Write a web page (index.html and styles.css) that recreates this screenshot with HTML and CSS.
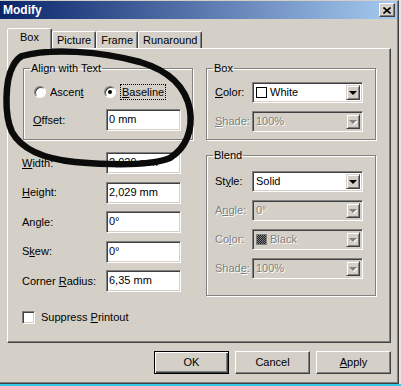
FILE: index.html
```html
<!DOCTYPE html>
<html lang="en">

<head>
    <meta charset="UTF-8">
    <title>Modify</title>
    <link rel="stylesheet" href="styles.css">
</head>

<body>
    <div class="window">
        <div class="titlebar">
            <span class="title">Modify</span>
            <span class="close">
                <svg width="8" height="7" viewBox="0 0 8 7"><path d="M0.5 0.5 L7.5 6.5 M7.5 0.5 L0.5 6.5" stroke="#000" stroke-width="1.6" fill="none"/></svg>
            </span>
        </div>

        <div class="content">
            <div class="tabs">
                <div class="tab active">Box</div>
                <div class="tab">Picture</div>
                <div class="tab">Frame</div>
                <div class="tab">Runaround</div>
            </div>

            <div class="panel">
                <div class="columns">
                    <div class="col-left">
                        <fieldset class="group align-group">
                            <legend>Align with Text</legend>
                            <div class="radios">
                                <div class="radio"><span class="dot"></span><span>Ascen<u>t</u></span></div>
                                <div class="radio checked"><span class="dot"></span><span class="focus"><u>B</u>aseline</span></div>
                            </div>
                            <div class="offset-row">
                                <span class="label"><u>O</u>ffset:</span>
                                <span class="input">0 mm</span>
                            </div>
                        </fieldset>

                        <div class="size-rows">
                            <div class="size-row"><span class="label"><u>W</u>idth:</span><span class="input">2,029 mm</span></div>
                            <div class="size-row"><span class="label"><u>H</u>eight:</span><span class="input">2,029 mm</span></div>
                            <div class="size-row"><span class="label">Angle:</span><span class="input">0°</span></div>
                            <div class="size-row"><span class="label">S<u>k</u>ew:</span><span class="input">0°</span></div>
                            <div class="size-row"><span class="label">Corner <u>R</u>adius:</span><span class="input">6,35 mm</span></div>
                        </div>
                    </div>

                    <div class="col-right">
                        <fieldset class="group box-group">
                            <legend>Box</legend>
                            <div class="combo-row">
                                <span class="label"><u>C</u>olor:</span>
                                <div class="combo"><span class="value"><span class="swatch white"></span><span>White</span></span><span class="arrow"></span></div>
                            </div>
                            <div class="combo-row disabled">
                                <span class="label"><u>S</u>hade:</span>
                                <div class="combo"><span class="value">100%</span><span class="arrow"></span></div>
                            </div>
                        </fieldset>

                        <fieldset class="group blend-group">
                            <legend>Blend</legend>
                            <div class="combo-row">
                                <span class="label">St<u>y</u>le:</span>
                                <div class="combo"><span class="value">Solid</span><span class="arrow"></span></div>
                            </div>
                            <div class="combo-row disabled">
                                <span class="label">A<u>n</u>gle:</span>
                                <div class="combo"><span class="value">0°</span><span class="arrow"></span></div>
                            </div>
                            <div class="combo-row disabled">
                                <span class="label">Co<u>l</u>or:</span>
                                <div class="combo"><span class="value"><span class="swatch black"></span><span>Black</span></span><span class="arrow"></span></div>
                            </div>
                            <div class="combo-row disabled">
                                <span class="label">Shad<u>e</u>:</span>
                                <div class="combo"><span class="value">100%</span><span class="arrow"></span></div>
                            </div>
                        </fieldset>
                    </div>
                </div>

                <div class="check-row">
                    <span class="checkbox"></span>
                    <span>Suppress <u>P</u>rintout</span>
                </div>
            </div>

            <div class="buttons">
                <div class="btn default">OK</div>
                <div class="btn">Cancel</div>
                <div class="btn"><span><u>A</u>pply</span></div>
            </div>
        </div>
    </div>

    <!-- hand-drawn marker loop over the dialog -->
    <svg class="scribble" width="401" height="386" viewBox="0 0 401 386">
        <path d="M22 56 C50 48, 100 51, 140 62 C170 71, 186 88, 190 110 C193 130, 186 148, 170 158 C150 166, 110 165, 75 162 C45 159, 22 150, 12 132 C4 115, 5 80, 13 66 C16 60, 18 58, 22 56 Z"
              fill="none" stroke="#0b0b0b" stroke-width="6.5" stroke-linecap="round" stroke-linejoin="round"/>
    </svg>
</body>

</html>
```

FILE: styles.css
```css
* {
    box-sizing: border-box;
}

body {
    margin: 0;
    width: 401px;
    height: 386px;
    overflow: hidden;
    font-family: "Liberation Sans", Arial, sans-serif;
    font-size: 11px;
    line-height: 13px;
    color: #000;
    background: linear-gradient(#e4e4e4 384px, #38c8ea 384px);
}

u {
    text-decoration-thickness: 1px;
    text-underline-offset: 1px;
}

.window {
    width: 399px;
    height: 384px;
    background: #d4d0c8;
    border-top: 1px solid #d4d0c8;
    border-right: 1px solid #404040;
    border-bottom: 1px solid #404040;
    box-shadow: inset -1px -1px #808080;
    padding-right: 1px;
}

.titlebar {
    display: flex;
    align-items: center;
    justify-content: space-between;
    height: 18px;
    padding: 0 2px 0 3px;
    background: linear-gradient(to right, #0a246a, #a6caf0);
    color: #fff;
    font-weight: bold;
    font-size: 12px;
}

.close {
    display: flex;
    align-items: center;
    justify-content: center;
    width: 16px;
    height: 14px;
    background: #d4d0c8;
    border: 1px solid;
    border-color: #fff #404040 #404040 #fff;
    box-shadow: inset -1px -1px #808080;
}

.content {
    padding: 9px 6px 0 7px;
}

/* tabs */
.tabs {
    display: flex;
    align-items: flex-end;
    height: 20px;
    position: relative;
    z-index: 1;
}

.tab {
    height: 17px;
    padding: 1px 4px 0;
    border: 1px solid;
    border-bottom: none;
    border-color: #fff #404040 transparent #fff;
    border-radius: 2px 2px 0 0;
    box-shadow: inset -1px 0 #808080;
    line-height: 15px;
    text-align: center;
}

.tab.active {
    height: 21px;
    margin-bottom: -1px;
    padding: 1px 12px 0;
    background: #d4d0c8;
}

.panel {
    height: 295px;
    border: 1px solid;
    border-color: #fff #404040 #404040 #fff;
    box-shadow: inset -1px -1px #808080;
    padding: 13px 14px 0;
}

.columns {
    display: grid;
    grid-template-columns: 171px 170px;
    column-gap: 13px;
    align-items: start;
}

/* group boxes */
.group {
    margin: 0;
    padding: 0 8px;
    border: 1px solid #808080;
    box-shadow: inset 1px 1px #fff, 1px 1px #fff;
    min-width: 0;
}

.group legend {
    padding: 0 1px;
    margin-left: -2px;
    line-height: 13px;
}

.align-group {
    margin-left: 1px;
    padding-bottom: 8px;
}

.radios {
    display: grid;
    grid-template-columns: 70px auto;
    margin: 9px 0 0 2px;
    height: 13px;
}

.radio {
    display: flex;
    align-items: center;
    gap: 4px;
}

.dot {
    position: relative;
    width: 12px;
    height: 12px;
    border-radius: 50%;
    background: #fff;
    border: 1px solid;
    border-color: #808080 #fff #fff #808080;
    box-shadow: inset 1px 1px #404040;
}

.radio.checked .dot::after {
    content: "";
    position: absolute;
    left: 3px;
    top: 3px;
    width: 4px;
    height: 4px;
    border-radius: 50%;
    background: #000;
}

.focus {
    border: 1px dotted #000;
    padding: 1px 1px 0;
    line-height: 13px;
}

.offset-row {
    display: grid;
    grid-template-columns: 74px 75px;
    align-items: center;
    margin-top: 12px;
}

.offset-row .label {
    padding-left: 1px;
}

.input {
    height: 22px;
    line-height: 19px;
    padding-left: 2px;
    background: #fff;
    border: 1px solid;
    border-color: #808080 #fff #fff #808080;
    box-shadow: inset 1px 1px #404040, inset -1px -1px #d4d0c8;
}

.size-rows {
    display: grid;
    row-gap: 7.5px;
    margin-top: 12px;
}

.size-row {
    display: grid;
    grid-template-columns: 84px 75px;
    align-items: center;
}

/* combo boxes */
.box-group {
    padding-bottom: 7px;
}

.blend-group {
    margin-top: 9px;
    padding-bottom: 16px;
}

.combo-row {
    display: grid;
    grid-template-columns: 37px 111px;
    align-items: center;
    margin-top: 8px;
}

.box-group .combo-row:first-of-type {
    margin-top: 7px;
}

.blend-group .combo-row:first-of-type {
    margin-top: 9px;
}

.combo {
    display: flex;
    align-items: center;
    justify-content: space-between;
    height: 21px;
    padding: 0 2px 0 3px;
    background: #fff;
    border: 1px solid;
    border-color: #808080 #fff #fff #808080;
    box-shadow: inset 1px 1px #404040, inset -1px -1px #d4d0c8;
}

.value {
    display: flex;
    align-items: center;
    gap: 3px;
}

.arrow {
    position: relative;
    width: 14px;
    height: 15px;
    background: #d4d0c8;
    border: 1px solid;
    border-color: #d4d0c8 #404040 #404040 #d4d0c8;
    box-shadow: inset 1px 1px #fff, inset -1px -1px #808080;
}

.arrow::after {
    content: "";
    position: absolute;
    left: 2px;
    top: 5px;
    border-left: 4px solid transparent;
    border-right: 4px solid transparent;
    border-top: 4px solid #000;
}

.swatch {
    width: 11px;
    height: 11px;
    border: 1px solid #000;
}

.swatch.white {
    background: #fff;
}

.swatch.black {
    border-color: #808080;
    background: repeating-conic-gradient(#202020 0 25%, #808080 0 50%) 0 0 / 2px 2px;
}

.disabled .label,
.disabled .value {
    color: #808080;
    text-shadow: 1px 1px #fff;
}

.disabled .combo {
    background: #d4d0c8;
}

.disabled .arrow::after {
    border-top-color: #808080;
    filter: drop-shadow(1px 1px 0 #fff);
}

/* checkbox */
.check-row {
    display: flex;
    align-items: center;
    gap: 6px;
    margin-top: 15px;
}

.checkbox {
    width: 13px;
    height: 13px;
    background: #fff;
    border: 1px solid;
    border-color: #808080 #fff #fff #808080;
    box-shadow: inset 1px 1px #404040, inset -1px -1px #d4d0c8;
}

/* dialog buttons */
.buttons {
    display: flex;
    justify-content: flex-end;
    gap: 6px;
    margin-top: 8px;
}

.btn {
    display: flex;
    align-items: center;
    justify-content: center;
    width: 75px;
    height: 23px;
    border: 1px solid;
    border-color: #fff #404040 #404040 #fff;
    box-shadow: inset -1px -1px #808080;
}

.btn.default {
    border-color: #000;
    box-shadow: inset 1px 1px #fff, inset -1px -1px #404040, inset -2px -2px #808080;
}

.scribble {
    position: absolute;
    left: 0;
    top: 0;
    pointer-events: none;
}
```
